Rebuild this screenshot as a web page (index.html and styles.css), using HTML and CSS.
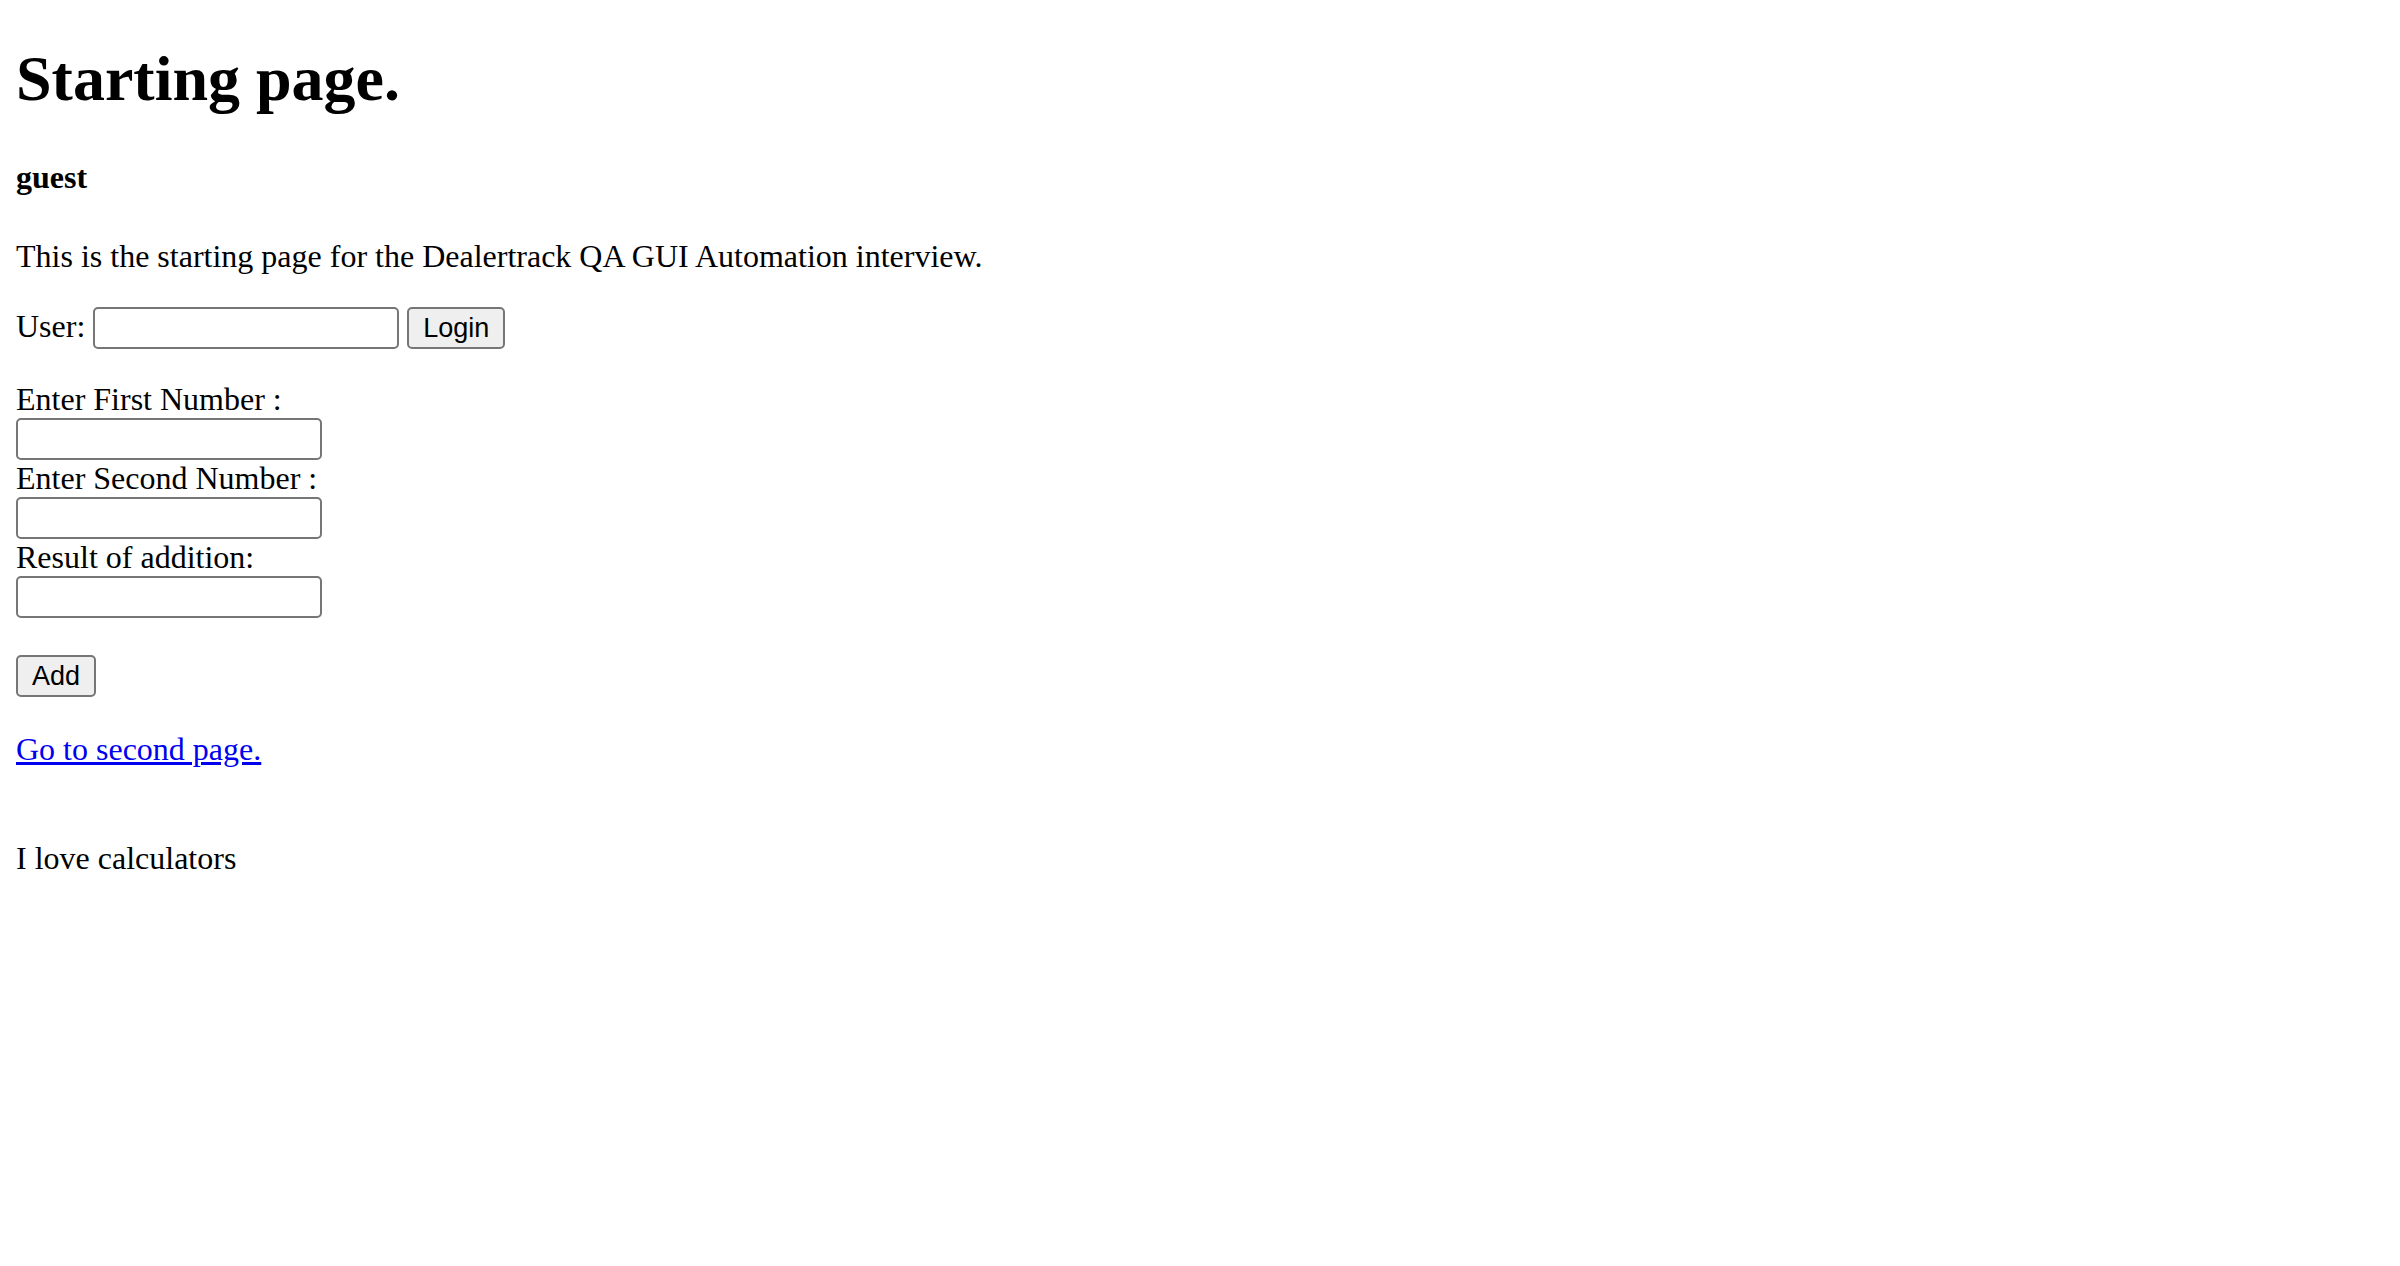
FILE: index.html
```html
<!DOCTYPE html>
<html lang="en">
<head>
<meta charset="utf-8">
<title>Starting page</title>
<link rel="stylesheet" href="styles.css">
</head>
<body class="page">
<h1 class="title">Starting page.</h1>
<h4 class="user-name">guest</h4>
<p class="intro">This is the starting page for the Dealertrack QA GUI Automation interview.</p>
<form class="login-form">User: <input class="field" type="text"> <button class="btn" type="button">Login</button></form>
<form class="calc-form">
Enter First Number :<br>
<input class="field" type="text"><br>
Enter Second Number :<br>
<input class="field" type="text"><br>
Result of addition:<br>
<input class="field" type="text"><br><br>
<button class="btn" type="button">Add</button>
</form>
<p class="nav"><a class="link" href="#">Go to second page.</a></p>
<p class="footer-note"><br>I love calculators</p>
</body>
</html>
```
FILE: styles.css
```css
html { background: #fff; }
.page {
  margin: 16px;
  font-family: "Liberation Serif", "Times New Roman", serif;
  font-size: 32px;
  color: #000;
}
.title {
  font-size: 64px;
  font-weight: bold;
  margin: 26px 0 42.88px;
}
.user-name {
  font-size: 32px;
  font-weight: bold;
  margin: 42.56px 0;
}
.intro { margin: 32px 0; }
.login-form { margin: 32px 0; }
.calc-form { margin: 32px 0; }
.nav { margin: 34px 0 32px; }
.footer-note { margin: 35px 0 32px; }
.field {
  box-sizing: border-box;
  width: 306px;
  height: 42px;
  margin: 0;
  padding: 2px 4px;
  border: 2px solid #767676;
  border-radius: 5px;
  background: #fff;
  font-family: "Liberation Sans", Arial, sans-serif;
  font-size: 26.67px;
  vertical-align: baseline;
}
.btn {
  box-sizing: border-box;
  height: 42px;
  margin: 0;
  padding: 2px 14px;
  border: 2px solid #767676;
  border-radius: 5px;
  background: #efefef;
  color: #000;
  font-family: "Liberation Sans", Arial, sans-serif;
  font-size: 27px;
}
.link {
  color: #0000ee;
  text-decoration: underline;
}
```
